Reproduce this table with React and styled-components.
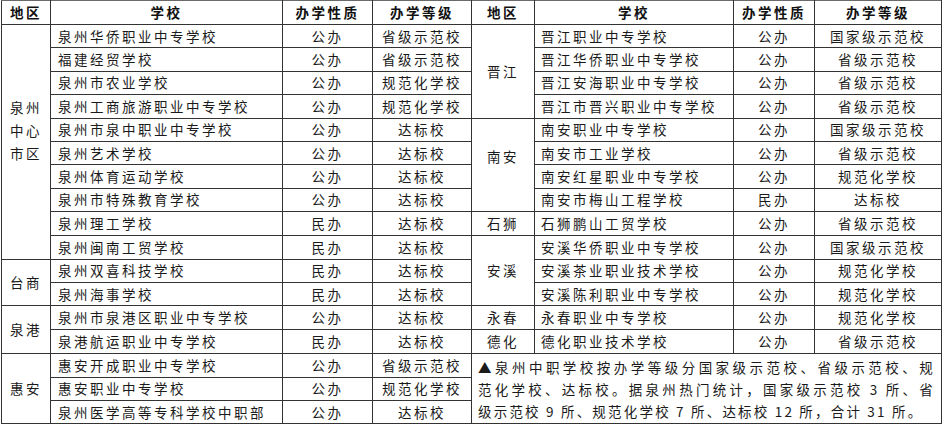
import styled, { createGlobalStyle } from 'styled-components';

const GlobalStyle = createGlobalStyle`
  html, body {
    margin: 0;
    padding: 0;
    background: #fff;
  }
  body {
    font-family: "Noto Sans CJK SC", "Liberation Serif", serif;
    color: #1a1a1a;
  }
`;

const leftGroups = [
  {
    region: ['泉州', '中心', '市区'],
    lift: 22,
    rows: [
      ['泉州华侨职业中专学校', '公办', '省级示范校'],
      ['福建经贸学校', '公办', '省级示范校'],
      ['泉州市农业学校', '公办', '规范化学校'],
      ['泉州工商旅游职业中专学校', '公办', '规范化学校'],
      ['泉州市泉中职业中专学校', '公办', '达标校'],
      ['泉州艺术学校', '公办', '达标校'],
      ['泉州体育运动学校', '公办', '达标校'],
      ['泉州市特殊教育学校', '公办', '达标校'],
      ['泉州理工学校', '民办', '达标校'],
      ['泉州闽南工贸学校', '民办', '达标校'],
    ],
  },
  {
    region: ['台商'],
    rows: [
      ['泉州双喜科技学校', '民办', '达标校'],
      ['泉州海事学校', '民办', '达标校'],
    ],
  },
  {
    region: ['泉港'],
    rows: [
      ['泉州市泉港区职业中专学校', '公办', '达标校'],
      ['泉港航运职业中专学校', '民办', '达标校'],
    ],
  },
  {
    region: ['惠安'],
    rows: [
      ['惠安开成职业中专学校', '公办', '省级示范校'],
      ['惠安职业中专学校', '公办', '规范化学校'],
      ['泉州医学高等专科学校中职部', '公办', '达标校'],
    ],
  },
];

const rightGroups = [
  {
    region: ['晋江'],
    rows: [
      ['晋江职业中专学校', '公办', '国家级示范校'],
      ['晋江华侨职业中专学校', '公办', '省级示范校'],
      ['晋江安海职业中专学校', '公办', '省级示范校'],
      ['晋江市晋兴职业中专学校', '公办', '省级示范校'],
    ],
  },
  {
    region: ['南安'],
    lift: 16,
    rows: [
      ['南安职业中专学校', '公办', '国家级示范校'],
      ['南安市工业学校', '公办', '省级示范校'],
      ['南安红星职业中专学校', '公办', '规范化学校'],
      ['南安市梅山工程学校', '民办', '达标校'],
    ],
  },
  { region: ['石狮'], rows: [['石狮鹏山工贸学校', '公办', '省级示范校']] },
  {
    region: ['安溪'],
    rows: [
      ['安溪华侨职业中专学校', '公办', '国家级示范校'],
      ['安溪茶业职业技术学校', '公办', '规范化学校'],
      ['安溪陈利职业中专学校', '公办', '规范化学校'],
    ],
  },
  { region: ['永春'], rows: [['永春职业中专学校', '公办', '规范化学校']] },
  { region: ['德化'], rows: [['德化职业技术学校', '公办', '省级示范校']] },
];

// flatten groups into per-row entries, region cell only on the first row
function flatten(groups) {
  const out = [];
  groups.forEach((g) => {
    g.rows.forEach((r, i) => {
      out.push({ cells: r, region: i === 0 ? g : null, span: g.rows.length });
    });
  });
  return out;
}

const leftRows = flatten(leftGroups);
const rightRows = flatten(rightGroups);

export default function App() {
  return (
    <>
      <GlobalStyle />
      <Page>
        <Table>
          <colgroup>
            <col style={{ width: 49 }} />
            <col style={{ width: 232 }} />
            <col style={{ width: 90 }} />
            <col style={{ width: 99 }} />
            <col style={{ width: 63 }} />
            <col style={{ width: 199 }} />
            <col style={{ width: 81 }} />
            <col style={{ width: 127 }} />
          </colgroup>
          <thead>
            <tr>
              <Head>地区</Head>
              <Head>学校</Head>
              <Head>办学性质</Head>
              <Head>办学等级</Head>
              <Head>地区</Head>
              <Head>学校</Head>
              <Head>办学性质</Head>
              <Head>办学等级</Head>
            </tr>
          </thead>
          <tbody>
            {leftRows.map((row, idx) => {
              const right = rightRows[idx];
              return (
                <Row key={idx}>
                  {row.region && (
                    <Region rowSpan={row.span} $lift={row.region.lift}>
                      {row.region.region.map((line) => (
                        <div key={line}>{line}</div>
                      ))}
                    </Region>
                  )}
                  <School>{row.cells[0]}</School>
                  <Centered>{row.cells[1]}</Centered>
                  <Centered>{row.cells[2]}</Centered>

                  {right && right.region && (
                    <Region rowSpan={right.span} $lift={right.region.lift}>
                      {right.region.region.map((line) => (
                        <div key={line}>{line}</div>
                      ))}
                    </Region>
                  )}
                  {right && (
                    <>
                      <School $pad={6}>{right.cells[0]}</School>
                      <Centered>{right.cells[1]}</Centered>
                      <Centered>{right.cells[2]}</Centered>
                    </>
                  )}
                  {idx === rightRows.length && (
                    <Note rowSpan={3} colSpan={4}>
                      <NoteLine $justify>▲泉州中职学校按办学等级分国家级示范校、省级示范校、规</NoteLine>
                      <NoteLine $justify>范化学校、达标校。据泉州热门统计，国家级示范校 3 所、省</NoteLine>
                      <NoteLine>级示范校 9 所、规范化学校 7 所、达标校 12 所，合计 31 所。</NoteLine>
                    </Note>
                  )}
                </Row>
              );
            })}
          </tbody>
        </Table>
      </Page>
    </>
  );
}

const Page = styled.div`
  padding: 0 0 0 1px;
  width: 945px;
  height: 442px;
  box-sizing: border-box;
`;

const Table = styled.table`
  width: 940px;
  table-layout: fixed;
  border-collapse: collapse;
  border: 1px solid #6a6a6a;
  font-size: 13.5px;
  letter-spacing: 2.5px;
  line-height: 19px;

  td,
  th {
    border: 1px solid #333;
    padding: 0;
    white-space: nowrap;
    overflow: hidden;
  }
`;

const Head = styled.th`
  height: 23px;
  font-weight: 700;
  text-align: center;
  color: #111;
  border-top-color: #6a6a6a !important;
`;

const Row = styled.tr`
  height: 23.4px;
`;

const Region = styled.td`
  text-align: center;
  vertical-align: middle;
  padding-bottom: ${(p) => p.$lift || 0}px !important;
  line-height: 23px;
`;

const School = styled.td`
  text-align: left;
  padding-left: ${(p) => p.$pad || 7}px !important;
`;

const Centered = styled.td`
  text-align: center;
`;

const Note = styled.td`
  padding: 0 6px !important;
  vertical-align: middle;
  white-space: normal !important;
`;

const NoteLine = styled.div`
  letter-spacing: 2.2px;
  text-align: ${(p) => (p.$justify ? 'justify' : 'left')};
  text-align-last: ${(p) => (p.$justify ? 'justify' : 'left')};
  white-space: nowrap;
  line-height: 22px;
`;
